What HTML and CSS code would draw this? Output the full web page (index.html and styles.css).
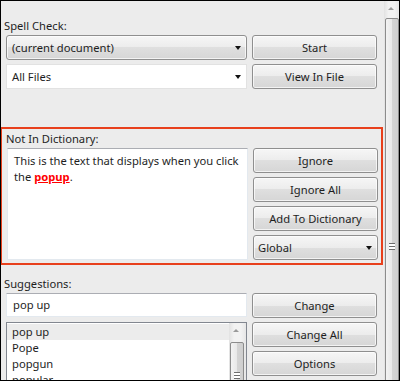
FILE: index.html
```html
<!DOCTYPE html>
<html lang="en">

<head>
    <meta charset="UTF-8">
    <title>Spell Check</title>
    <link rel="stylesheet" href="styles.css">
</head>

<body>
    <div class="window">
        <div class="panel">
            <!-- Spell check scope -->
            <div class="group top-group">
                <div class="label">Spell Check:</div>
                <div class="row">
                    <div class="combo combo-btn">(current document)<span class="arrow"></span></div>
                    <button class="btn">Start</button>
                </div>
                <div class="row">
                    <div class="combo combo-white">All Files<span class="arrow"></span></div>
                    <button class="btn">View In File</button>
                </div>
            </div>

            <!-- Highlighted word -->
            <div class="group highlight">
                <div class="label">Not In Dictionary:</div>
                <div class="row">
                    <div class="textarea">This is the text that displays when you click the <span class="word">popup</span>.</div>
                    <div class="buttons">
                        <button class="btn">Ignore</button>
                        <button class="btn">Ignore All</button>
                        <button class="btn">Add To Dictionary</button>
                        <div class="combo combo-btn small">Global<span class="arrow"></span></div>
                    </div>
                </div>
            </div>

            <!-- Suggestions -->
            <div class="group suggest-group">
                <div class="label">Suggestions:</div>
                <div class="row">
                    <div class="textbox">pop up</div>
                    <button class="btn">Change</button>
                </div>
                <div class="row">
                    <div class="listbox">
                        <ul class="items">
                            <li class="selected">pop up</li>
                            <li>Pope</li>
                            <li>popgun</li>
                            <li>popular</li>
                        </ul>
                        <div class="scrollbar list-scroll">
                            <span class="up"></span>
                            <div class="thumb"><span class="grip"></span></div>
                        </div>
                    </div>
                    <div class="buttons">
                        <button class="btn">Change All</button>
                        <button class="btn">Options</button>
                    </div>
                </div>
            </div>
        </div>

        <div class="scrollbar main-scroll">
            <span class="up"></span>
            <div class="thumb"><span class="grip"></span></div>
        </div>
    </div>
</body>

</html>
```

FILE: styles.css
```css
* {
    margin: 0;
    padding: 0;
    box-sizing: border-box;
}

body {
    font-family: 'Noto Sans', sans-serif;
    font-size: 11.2px;
    color: #1e1e1e;
    background: #ececec;
}

.window {
    width: 400px;
    height: 381px;
    border: 1px solid #000;
    background: #ececec;
    display: flex;
    overflow: hidden;
}

.panel {
    width: 383px;
    flex-shrink: 0;
}

.group {
    display: flex;
    flex-direction: column;
    gap: 4px;
    padding-left: 5px;
}

.label {
    line-height: 16px;
    padding-left: 3px;
    margin-left: -5px;
    margin-bottom: -3px;
}

.top-group {
    padding-top: 17px;
}

.highlight {
    margin-top: 38px;
    margin-left: -1px;
    width: 383px;
    border: 2px solid #e8401c;
    padding: 2px 0 3px 5px;
}

.highlight .label {
    margin-left: -3px;
    padding-left: 2px;
}

.suggest-group {
    padding-top: 11px;
}

.row {
    display: flex;
    gap: 5px;
    align-items: flex-start;
}

.buttons {
    display: flex;
    flex-direction: column;
    gap: 4px;
}

.btn,
.combo-btn {
    width: 125px;
    height: 25px;
    border: 1px solid #8f8f8f;
    border-radius: 3px;
    background: linear-gradient(#f6f6f6, #ececec 50%, #dfdfdf 50%, #d6d6d6);
    box-shadow: inset 0 0 0 1px rgba(255, 255, 255, 0.7);
    font: inherit;
    color: inherit;
    text-align: center;
}

.combo {
    position: relative;
    width: 241px;
    height: 25px;
    line-height: 23px;
    padding-left: 5px;
    text-align: left;
}

.combo.small {
    width: 125px;
    padding-left: 4px;
}

.combo-white {
    background: #fff;
    border: 1px solid #e2e2e2;
}

.arrow {
    position: absolute;
    right: 5px;
    top: 10px;
    border-left: 3.5px solid transparent;
    border-right: 3.5px solid transparent;
    border-top: 4px solid #111;
}

.textarea {
    width: 241px;
    height: 112px;
    background: #fff;
    border: 1px solid #e3e9ef;
    border-top-color: #abadb3;
    padding: 4px 6px;
    line-height: 16px;
}

.word {
    color: #f00;
    font-weight: bold;
    text-decoration: underline;
}

.textbox {
    width: 241px;
    height: 24px;
    background: #fff;
    border: 1px solid #e3e9ef;
    border-top-color: #abadb3;
    padding-left: 6px;
    line-height: 21px;
}

.listbox {
    position: relative;
    width: 241px;
    height: 70px;
    background: #fff;
    border: 1px solid #828790;
}

.items {
    list-style: none;
    padding-top: 1px;
}

.items li {
    line-height: 16px;
    padding-left: 5px;
}

.items li.selected {
    background: #ececec;
}

.scrollbar {
    background: linear-gradient(90deg, #e2e2e2, #f2f2f2 30%, #f2f2f2 70%, #e6e6e6);
    position: relative;
}

.main-scroll {
    width: 15px;
    height: 100%;
}

.list-scroll {
    position: absolute;
    top: 0;
    right: 0;
    width: 17px;
    height: 100%;
}

.up {
    position: absolute;
    left: 4px;
    top: 6px;
    border-left: 3px solid transparent;
    border-right: 3px solid transparent;
    border-bottom: 3px solid #9a9a9a;
}

.main-scroll .up {
    left: 4px;
}

.thumb {
    position: absolute;
    left: 1px;
    right: 0;
    top: 17px;
    bottom: -40px;
    border: 1px solid #8c8c8c;
    border-radius: 2px;
    background: linear-gradient(90deg, #f3f3f3, #e8e8e8 50%, #d4d4d4 51%, #cfcfcf);
}

.list-scroll .thumb {
    left: 1px;
    right: 2px;
    top: 19px;
}

.grip {
    position: absolute;
    left: 3px;
    top: 224px;
    width: 6px;
    height: 7px;
    border-top: 1px solid #6d6d6d;
    border-bottom: 1px solid #6d6d6d;
    background: linear-gradient(#fff 2px, #6d6d6d 2px, #6d6d6d 3px, #fff 3px);
}

.list-scroll .grip {
    top: 29px;
    left: 3px;
}
```
